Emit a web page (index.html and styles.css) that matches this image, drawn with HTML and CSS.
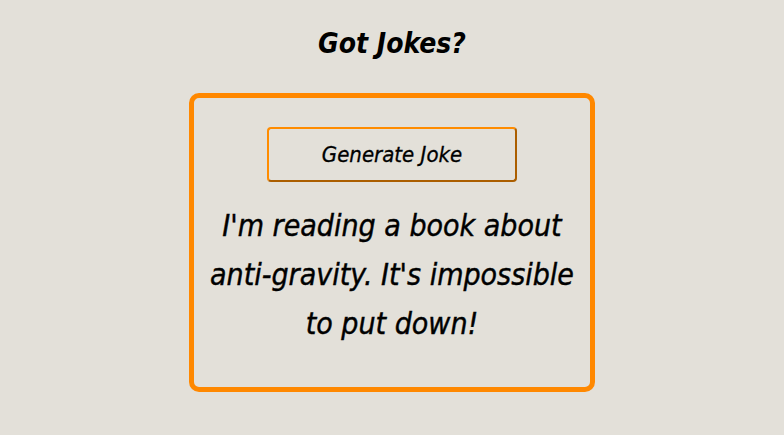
FILE: index.html
```html
<!DOCTYPE html>
<html>
<head>
<meta charset="utf-8">
<link rel="stylesheet" href="styles.css">
</head>
<body>
<h1 class="title">Got Jokes?</h1>
<div class="card">
  <button class="btn">Generate Joke</button>
  <p class="joke">I'm reading a book about anti-gravity. It's impossible to put down!</p>
</div>
</body>
</html>
```
FILE: styles.css
```css
body {
  margin: 0;
  background: #e3e0d9;
  font-family: "DejaVu Sans", sans-serif;
  font-style: italic;
  font-stretch: condensed;
  color: #000;
  display: flex;
  flex-direction: column;
  align-items: center;
}
.title {
  font-size: 28px;
  font-weight: bold;
  margin: 24px 0 0;
  line-height: 40px;
}
.card {
  margin-top: 29px;
  width: 396px;
  height: 289px;
  border: 5px solid #ff8800;
  border-radius: 10px;
  display: flex;
  flex-direction: column;
  align-items: center;
  box-sizing: content-box;
}
.btn {
  margin-top: 29px;
  width: 250px;
  height: 55px;
  background: transparent;
  border: 2px outset #ff8c00;
  border-radius: 4px;
  font-family: inherit;
  font-style: italic;
  font-stretch: condensed;
  font-size: 22px;
  color: #000;
  -webkit-text-stroke: 0.3px #000;
}
.joke {
  margin: 19px 0 0;
  font-size: 30px;
  line-height: 49px;
  text-align: center;
  padding: 0 8px;
  -webkit-text-stroke: 0.4px #000;
}
```
